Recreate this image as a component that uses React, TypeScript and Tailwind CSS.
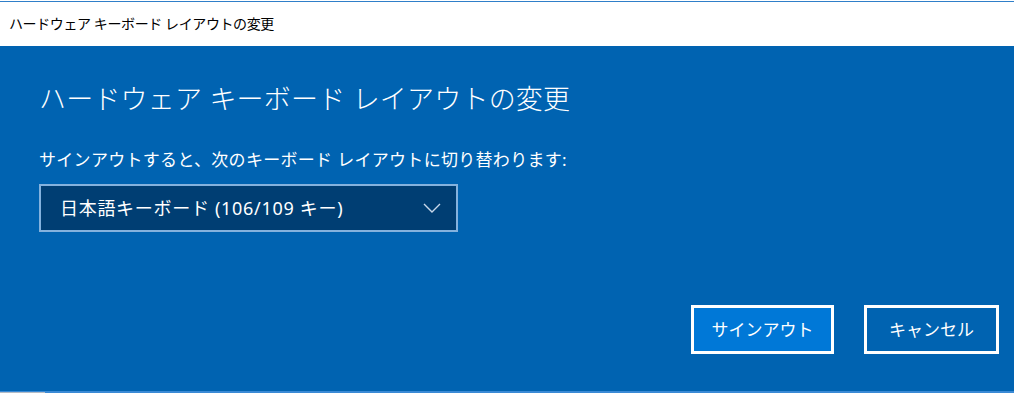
import React from "react";

const FONT = "font-['Noto_Sans','Noto_Sans_CJK_JP',sans-serif]";

const App: React.FC = () => {
  return (
    <div className={`w-[1014px] h-[393px] flex flex-col bg-white ${FONT}`}>
      {/* Title bar */}
      <div className="h-px bg-white" />
      <div className="h-px bg-[#2f7fc9]" />
      <div className="h-[44px] flex items-center pl-[9px] pb-[1px] text-[14px] tracking-[-0.4px] text-black">
        ハードウェア キーボード レイアウトの変更
      </div>

      {/* Body */}
      <div className="flex-1 flex flex-col bg-[#0063b1] text-white pl-[39px] pr-[15px]">
        <h1 className="mt-[35px] text-[27px] font-light leading-[36px] tracking-[0.2px]">
          ハードウェア キーボード レイアウトの変更
        </h1>
        <p className="mt-[31px] text-[17px] leading-[24px] tracking-[0.3px]">
          サインアウトすると、次のキーボード レイアウトに切り替わります:
        </p>
        <div className="mt-[12px] w-[419px] h-[48px] flex items-center justify-between border-2 border-[#84b2de] bg-[#003e73] pl-[19px] pr-[15px]">
          <span className="text-[18px] leading-[24px] tracking-[0.7px]">日本語キーボード (106/109 キー)</span>
          <svg width="18" height="10" viewBox="0 0 18 10" fill="none">
            <path d="M1 1l8 8 8-8" stroke="#c8d8ea" strokeWidth="1.4" />
          </svg>
        </div>

        <div className="mt-[73px] flex justify-end gap-[30px]">
          <button className="w-[143px] h-[49px] border-[3px] border-white bg-[#0078d7] text-[17px]">
            サインアウト
          </button>
          <button className="w-[135px] h-[49px] border-[3px] border-white bg-[#0063b1] text-[17px]">
            キャンセル
          </button>
        </div>
        <div className="flex-1" />
      </div>
      <div className="h-[2px] flex bg-[#3a8ad5]">
        <div className="w-[45px] mt-px bg-[#b4bcc6]" />
      </div>
    </div>
  );
};

export default App;
